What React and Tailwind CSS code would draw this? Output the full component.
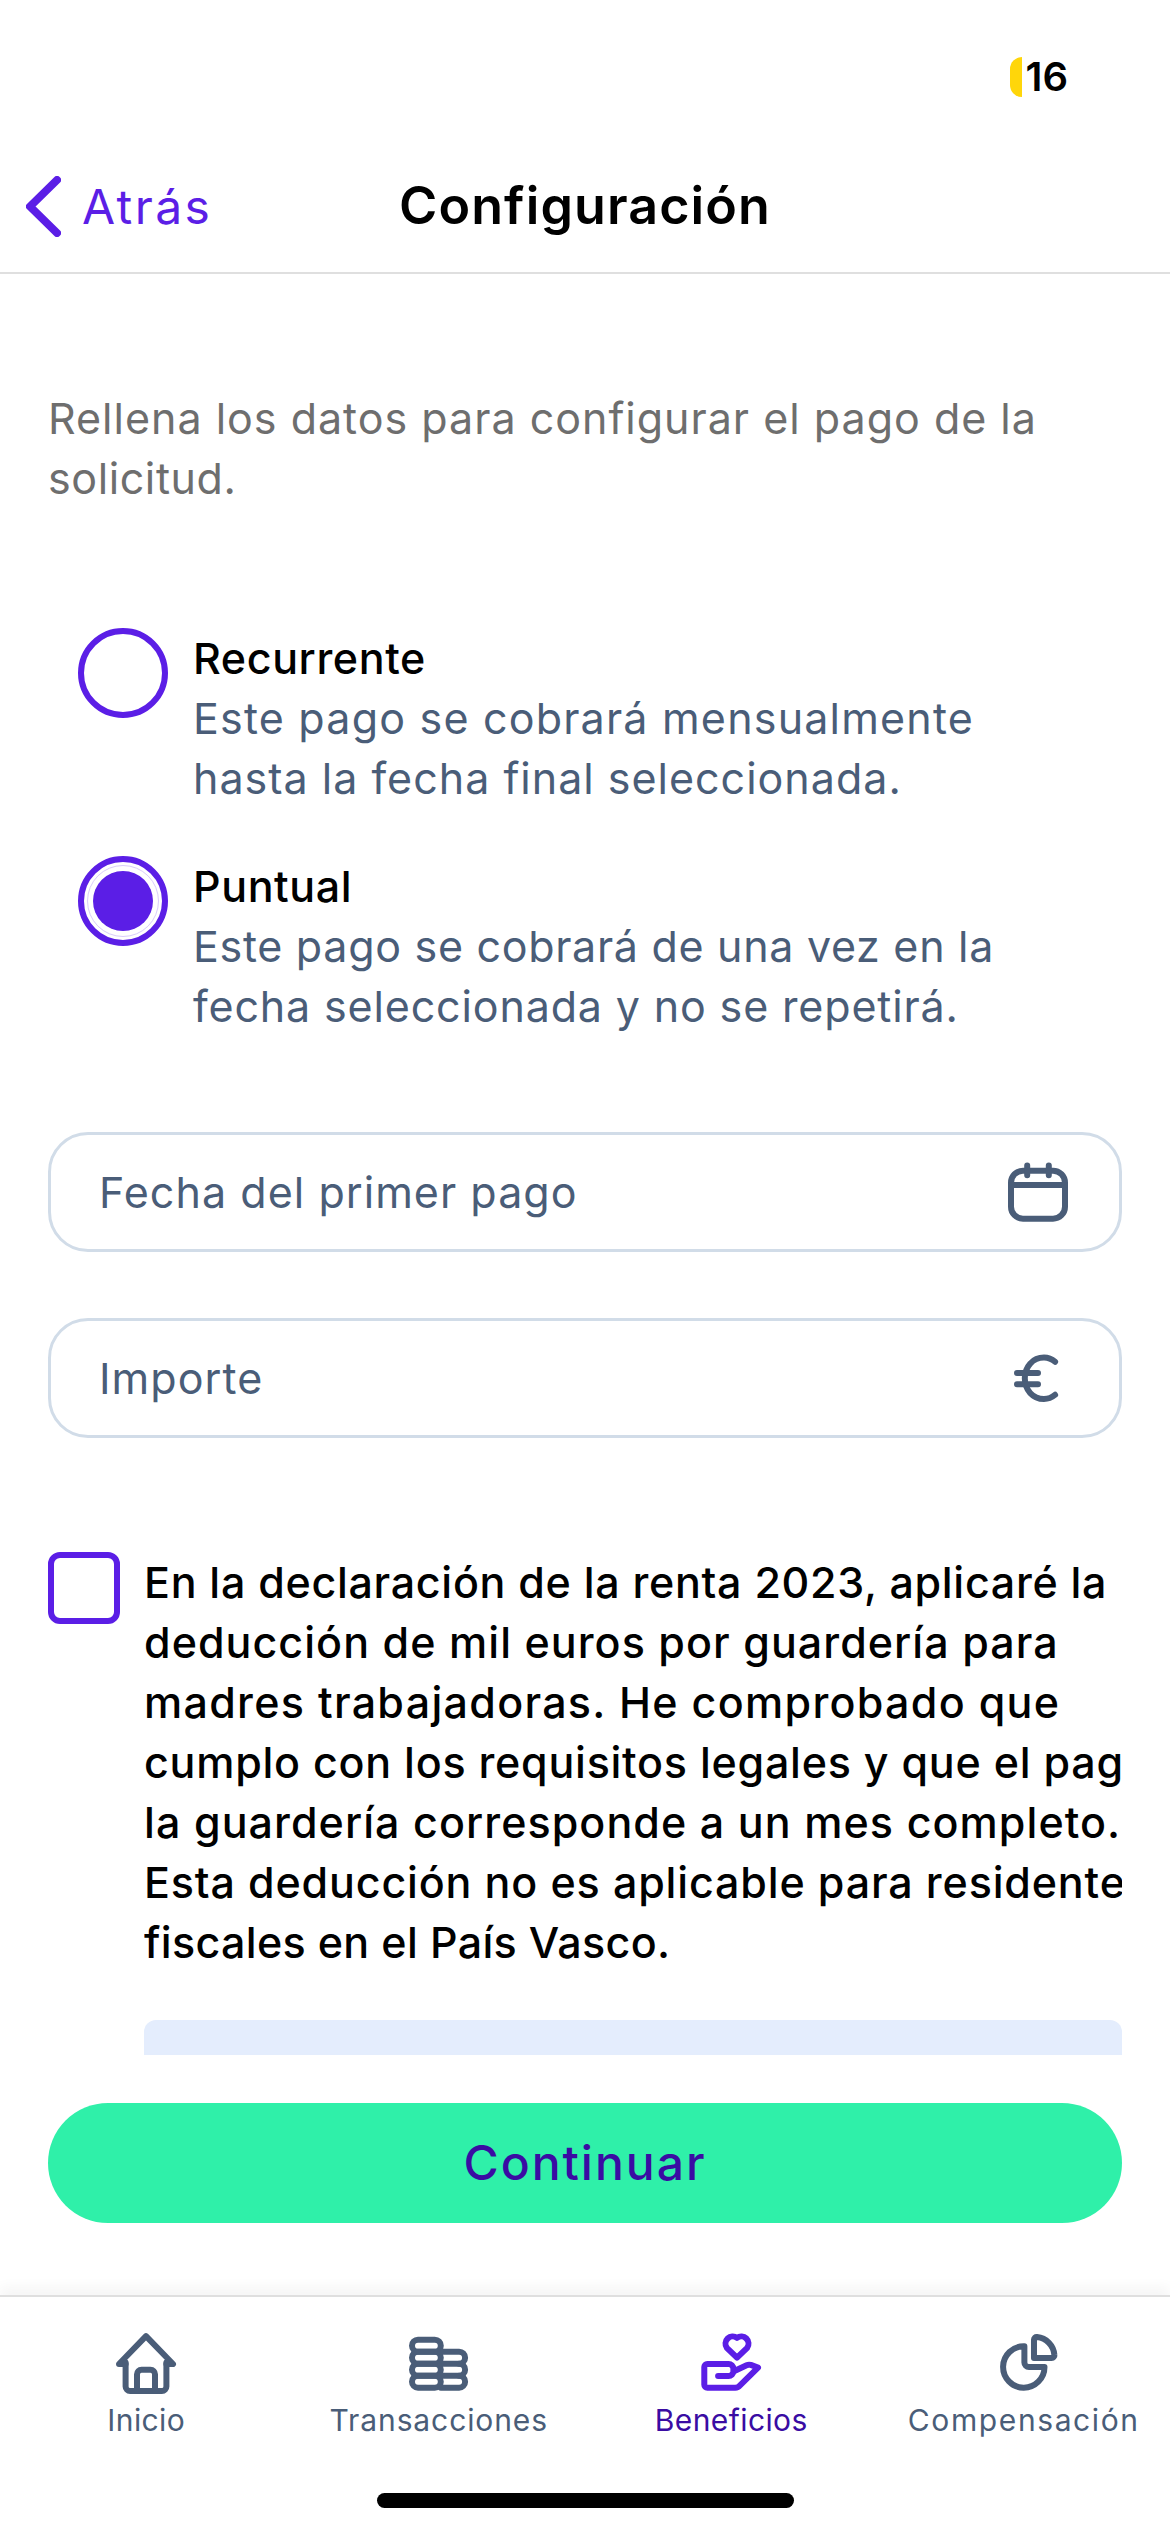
import React from "react";

const font = { fontFamily: "Inter, 'Noto Sans', sans-serif" };

const declaration = [
  { text: "En la declaración de la renta 2023, aplicaré la", tracking: "tracking-[0.7px]" },
  { text: "deducción de mil euros por guardería para", tracking: "tracking-[1.05px]" },
  { text: "madres trabajadoras. He comprobado que", tracking: "tracking-[1.3px]" },
  { text: "cumplo con los requisitos legales y que el pago de", tracking: "tracking-[0.75px]" },
  { text: "la guardería corresponde a un mes completo.", tracking: "tracking-[1.07px]" },
  { text: "Esta deducción no es aplicable para residentes", tracking: "tracking-[0.85px]" },
  { text: "fiscales en el País Vasco.", tracking: "tracking-[0.33px]" },
];

const Icon = ({ children, className = "text-[#4a5d78]", viewBox = "0 0 24 24" }) => (
  <svg
    viewBox={viewBox}
    fill="none"
    stroke="currentColor"
    strokeWidth="2"
    strokeLinecap="round"
    strokeLinejoin="round"
    className={`w-[72px] h-[72px] shrink-0 ${className}`}
  >
    {children}
  </svg>
);

const HomeIcon = () => (
  <Icon>
    <path d="M5.2 12H3L12 2.700 21 12h-2.200" />
    <path d="M5.200 11.500v8a1.500 1.500 0 0 0 1.500 1.500h10.600a1.500 1.500 0 0 0 1.500-1.500v-8" />
    <path d="M9 21v-5.600a1.500 1.500 0 0 1 1.500-1.500h3a1.500 1.500 0 0 1 1.500 1.500V21" />
  </Icon>
);

const CoinsIcon = () => (
  <Icon>
    <rect x="3" y="3.900" width="9.600" height="4" rx="2" />
    <rect x="3" y="7.900" width="9.600" height="4" rx="2" />
    <rect x="3" y="11.900" width="9.600" height="4" rx="2" />
    <rect x="3" y="15.900" width="9.600" height="4" rx="2" />
    <path d="M12.600 7.900h6.100a2 2 0 0 1 0 4h-6.100" />
    <path d="M18.700 11.900a2 2 0 0 1 0 4h-6.100" />
    <path d="M18.700 15.900a2 2 0 0 1 0 4h-6.100" />
  </Icon>
);

const HandHeartIcon = () => (
  <Icon className="text-[#5b1ee6]">
    <path d="M14 9.900l-3.400-3.300a2.400 2.400 0 0 1 3.400-3.300 2.400 2.400 0 0 1 3.400 3.300z" />
    <path d="M7.700 16h3.500a1.600 1.600 0 0 0 1.600-1.600v-.8a1.600 1.600 0 0 0-1.600-1.600H4.100a1 1 0 0 0-1 1v5.900a1 1 0 0 0 1 1h9.300a2.200 2.200 0 0 0 1.600-.8l6-5.900-2.400-.9a2 2 0 0 0-1.400.1l-4.400 2.100" />
  </Icon>
);

const PieIcon = () => (
  <Icon viewBox="-1.33 0 24 24">
    <path d="M10.800 6.100A6.900 6.900 0 1 0 17.500 13h-5.200a1.500 1.500 0 0 1-1.500-1.500z" />
    <path d="M14 3.900a.9.9 0 0 1 1-.9 6.500 6.500 0 0 1 5.800 6 .9.9 0 0 1-.9 1H14z" />
  </Icon>
);

const tabs = [
  { label: "Inicio", icon: <HomeIcon />, tracking: "tracking-[0.4px]" },
  { label: "Transacciones", icon: <CoinsIcon />, tracking: "tracking-[0.9px]" },
  { label: "Beneficios", icon: <HandHeartIcon />, tracking: "tracking-[0.4px]", active: true },
  { label: "Compensación", icon: <PieIcon />, tracking: "tracking-[1.6px]" },
];

const Radio = ({ title, lines, checked }) => (
  <div className="flex pl-[30px] gap-[25px]">
    <div className="w-[90px] h-[90px] rounded-full border-[6px] border-[#5b1ee6] flex items-center justify-center shrink-0">
      {checked && (
        <div className="w-[72px] h-[72px] rounded-full border border-[#d9ccfa] flex items-center justify-center">
          <div className="w-[60px] h-[60px] rounded-full bg-[#5b1ee6]" />
        </div>
      )}
    </div>
    <div className="text-[43px] leading-[60px] whitespace-nowrap">
      <div className="font-medium text-black tracking-[0.6px]">{title}</div>
      {lines.map((l) => (
        <div key={l.text} className={`text-[#4a5d78] ${l.tracking}`}>
          {l.text}
        </div>
      ))}
    </div>
  </div>
);

const Field = ({ label, children }) => (
  <div className="h-[120px] rounded-[40px] border-[3px] border-[#d1dce8] flex items-center justify-between pl-[48px] pr-[45px]">
    <span className="text-[43px] tracking-[1.05px] text-[#4a5d78]">{label}</span>
    {children}
  </div>
);

export default function App() {
  return (
    <div style={font} className="w-[1170px] h-[2532px] bg-white flex flex-col overflow-hidden">
      <div className="h-[150px] flex justify-end pt-[57px] pr-[102px] shrink-0">
        <div className="flex items-center h-[40px] gap-[4px]">
          <div className="w-[12px] h-[40px] bg-[#ffd60a] rounded-l-full" />
          <span className="text-[40px] font-semibold text-black leading-none">16</span>
        </div>
      </div>

      <div className="h-[124px] border-b-2 border-[#dfdfdf] grid grid-cols-[1fr_auto_1fr] items-start pt-[26px] shrink-0">
        <div className="flex items-center gap-[21px] pl-[26px] text-[#5b1ee6]">
          <svg viewBox="0 0 35 61" fill="none" stroke="currentColor" strokeWidth="8" strokeLinecap="round" strokeLinejoin="round" className="w-[35px] h-[61px]">
            <path d="M31 4 4 30.500l27 26.500" />
          </svg>
          <span className="text-[48px] tracking-[2.4px] leading-none">Atrás</span>
        </div>
        <div className="text-[52px] font-semibold text-black leading-[60px] tracking-[1.1px]">Configuración</div>
        <div />
      </div>

      <div className="flex-1 overflow-hidden pl-[48px] pr-[48px] pt-[114px]">
        <p className="text-[43px] leading-[60px] tracking-[1px] text-[#6e6e6e] whitespace-nowrap">
          Rellena los datos para configurar el pago de la
          <br />
          <span className="tracking-[0.6px]">solicitud.</span>
        </p>

        <div className="mt-[120px] flex flex-col gap-[48px]">
          <Radio
            title="Recurrente"
            lines={[
              { text: "Este pago se cobrará mensualmente", tracking: "tracking-[1.2px]" },
              { text: "hasta la fecha final seleccionada.", tracking: "tracking-[1px]" },
            ]}
          />
          <Radio
            checked
            title="Puntual"
            lines={[
              { text: "Este pago se cobrará de una vez en la", tracking: "tracking-[0.7px]" },
              { text: "fecha seleccionada y no se repetirá.", tracking: "tracking-[0.85px]" },
            ]}
          />
        </div>

        <div className="mt-[96px] flex flex-col gap-[66px]">
          <Field label="Fecha del primer pago">
            <Icon>
              <rect x="3" y="4.900" width="18" height="16" rx="4" />
              <path d="M3 9.700h18M8.400 3.200v3.200M15.600 3.200v3.200" />
            </Icon>
          </Field>
          <Field label="Importe">
            <Icon>
              <path d="M17.700 6.600C16.500 5.600 15.200 5.200 14 5.200c-3.800 0-6.400 3.100-6.400 6.900S10.200 19 14 19c1.200 0 2.500-.4 3.700-1.400" />
              <path d="M5 10.300h7M5 14.100h7" />
            </Icon>
          </Field>
        </div>

        <div className="mt-[114px] flex gap-[24px]">
          <div className="w-[72px] h-[72px] rounded-[12px] border-[6px] border-[#5b1ee6] shrink-0" />
          <div className="flex-1 min-w-0 overflow-hidden">
            <div className="text-[43px] leading-[60px] font-medium text-black whitespace-nowrap">
              {declaration.map((l) => (
                <div key={l.text} className={l.tracking}>
                  {l.text}
                </div>
              ))}
            </div>
            <div className="mt-[48px] h-[60px] rounded-[12px] bg-[#e4edfd]" />
          </div>
        </div>
      </div>

      <div className="px-[48px] pt-[48px] pb-[72px] shrink-0">
        <div className="h-[120px] rounded-full bg-[#2ff0a9] flex items-center justify-center text-[48px] font-medium tracking-[2px] text-[#3a0ca3]">
          Continuar
        </div>
      </div>

      <div className="h-[237px] border-t-2 border-[#dfdfdf] shadow-[0_-8px_12px_rgba(0,0,0,0.04)] pt-[31px] shrink-0">
        <div className="grid grid-cols-4">
          {tabs.map((t) => (
            <div key={t.label} className="flex flex-col items-center">
              {t.icon}
              <span
                className={`text-[30px] leading-[40px] ${t.tracking} ${
                  t.active ? "text-[#3a0ca3]" : "text-[#4a5d78]"
                }`}
              >
                {t.label}
              </span>
            </div>
          ))}
        </div>
        <div className="w-[417px] h-[15px] rounded-full bg-black mx-auto mt-[53px]" />
      </div>
    </div>
  );
}
